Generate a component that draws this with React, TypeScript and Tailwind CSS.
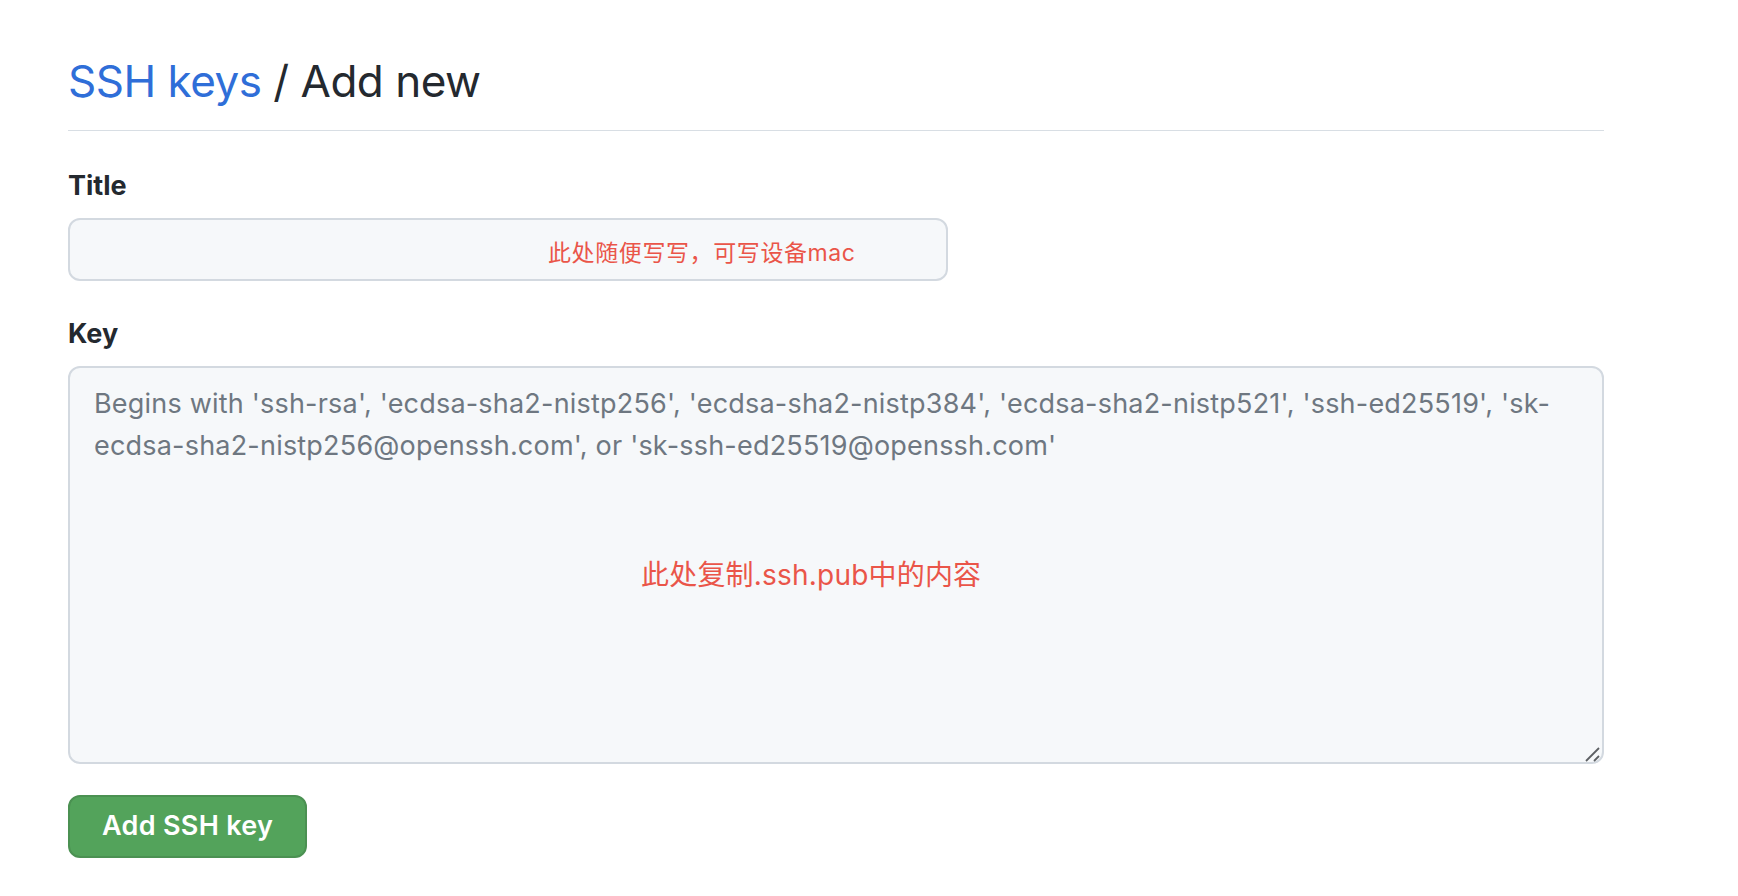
import React from "react";

export default function App() {
  const placeholder =
    "Begins with 'ssh-rsa', 'ecdsa-sha2-nistp256', 'ecdsa-sha2-nistp384', 'ecdsa-sha2-nistp521', 'ssh-ed25519', 'sk-\necdsa-sha2-nistp256@openssh.com', or 'sk-ssh-ed25519@openssh.com'";
  return (
    <div
      className="min-h-screen bg-white text-[#24292f]"
      style={{ fontFamily: '"Inter", "Noto Sans CJK SC", sans-serif' }}
    >
      <div className="w-[1604px] pl-[68px] pt-[53px]">
        <h1 className="border-b border-[#d8dee4] pb-[21px] text-[44px] font-normal leading-[56px] tracking-[-0.5px]">
          <a href="#" className="text-[#2f6ed8]">
            SSH keys
          </a>{" "}
          / Add new
        </h1>

        <form className="mt-[37px]" onSubmit={(e) => e.preventDefault()}>
          <label htmlFor="title" className="block text-[27px] font-bold leading-[36px]">
            Title
          </label>
          <div className="relative mt-[14px] w-[880px]">
            <input
              id="title"
              type="text"
              className="block h-[63px] w-full rounded-[12px] border-2 border-[#d3d9e0] bg-[#f6f8fa] px-[24px] text-[27px] outline-none"
            />
            <span className="pointer-events-none absolute left-[480px] top-[20px] text-[23px] leading-[30px] tracking-[0.6px] text-[#ea5549]">
              此处随便写写，可写设备mac
            </span>
          </div>

          <label htmlFor="key" className="mt-[35px] block text-[27px] font-bold leading-[36px]">
            Key
          </label>
          <div className="relative mt-[14px] w-[1536px]">
            <textarea
              id="key"
              placeholder={placeholder}
              className="block h-[398px] w-full resize-none rounded-[12px] border-2 border-[#d3d9e0] bg-[#f6f8fa] px-[24px] pt-[15px] text-[27px] leading-[42px] tracking-[0.2px] text-[#24292f] outline-none placeholder:text-[#6e7781]"
            />
            <span className="pointer-events-none absolute left-[573px] top-[191px] text-[28px] leading-[36px] tracking-[0.2px] text-[#ea5549]">
              此处复制.ssh.pub中的内容
            </span>
            <svg
              className="pointer-events-none absolute bottom-[2px] right-[4px]"
              width="16"
              height="16"
              viewBox="0 0 16 16"
            >
              <line x1="2" y1="15" x2="15" y2="2" stroke="#5c5f63" strokeWidth="1.8" />
              <line x1="10" y1="15" x2="15" y2="10" stroke="#5c5f63" strokeWidth="1.8" />
            </svg>
          </div>

          <button
            type="submit"
            className="mt-[31px] h-[63px] rounded-[12px] border-2 border-[#4b9152] bg-[#53a35b] px-[32px] text-[27px] font-semibold tracking-[0.3px] text-white"
          >
            Add SSH key
          </button>
        </form>
      </div>
    </div>
  );
}
